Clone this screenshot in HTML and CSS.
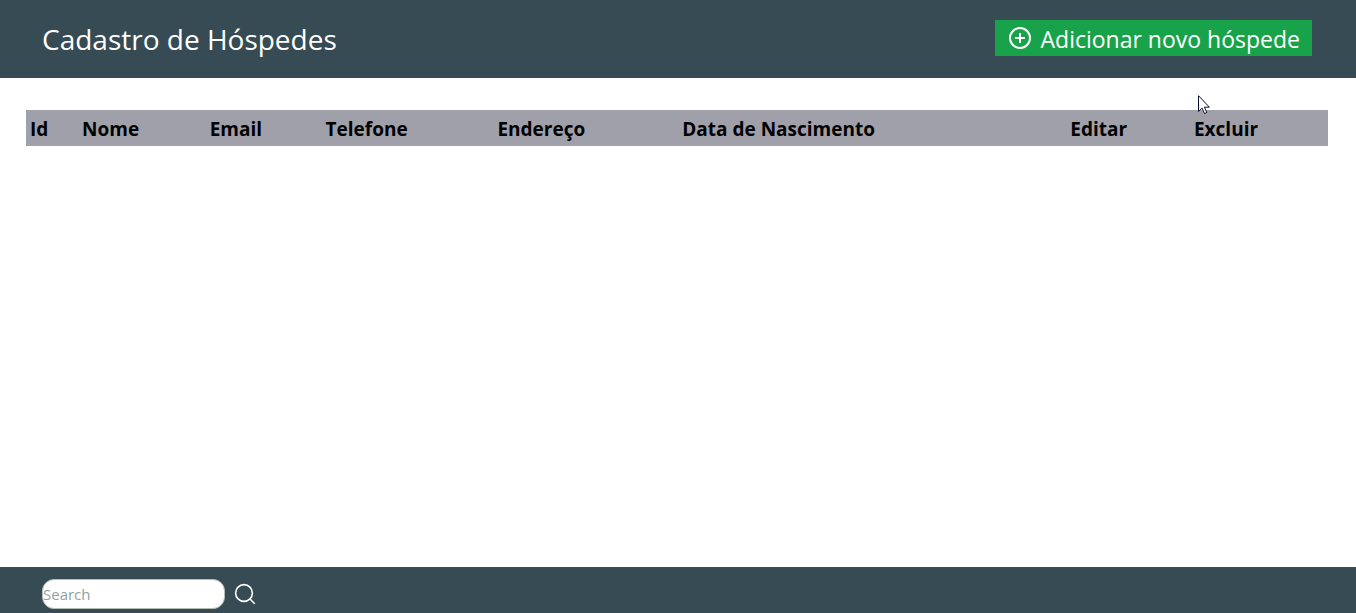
FILE: index.html
```html
<!DOCTYPE html>
<html lang="pt-BR">
<head>
  <meta charset="utf-8">
  <meta name="viewport" content="width=device-width, initial-scale=1">
  <title>Cadastro de Hóspedes</title>
  <link rel="stylesheet" href="styles.css">
</head>
<body class="page">
  <header class="topbar">
    <h1 class="topbar-title">Cadastro de Hóspedes</h1>
    <button class="add-button" type="button">
      <svg class="add-icon" viewBox="0 0 24 24" fill="none" stroke="currentColor" stroke-width="2" aria-hidden="true">
        <circle cx="12" cy="12" r="10"/>
        <path d="M12 7v10M7 12h10"/>
      </svg>
      <span>Adicionar novo hóspede</span>
    </button>
  </header>

  <main class="content">
    <table class="guests">
      <colgroup>
        <col class="col-id"><col class="col-name"><col class="col-email"><col class="col-phone">
        <col class="col-address"><col class="col-birth"><col class="col-edit"><col class="col-delete">
      </colgroup>
      <thead>
        <tr>
          <th scope="col">Id</th>
          <th scope="col">Nome</th>
          <th scope="col">Email</th>
          <th scope="col">Telefone</th>
          <th scope="col">Endereço</th>
          <th scope="col">Data de Nascimento</th>
          <th scope="col">Editar</th>
          <th scope="col">Excluir</th>
        </tr>
      </thead>
      <tbody></tbody>
    </table>
  </main>

  <footer class="footer">
    <form class="search">
      <input class="search-input" type="text" placeholder="Search" aria-label="Search">
      <button class="search-button" type="button" aria-label="Search">
        <svg class="search-icon" viewBox="0 0 22 22" fill="none" stroke="currentColor" stroke-width="1.6" aria-hidden="true">
          <circle cx="10" cy="10" r="8.4"/>
          <path d="M16 16l4.7 4.7"/>
        </svg>
      </button>
    </form>
  </footer>

  <svg class="pointer" viewBox="0 0 12 20" aria-hidden="true">
    <path d="M.5 .7v15.8l3.6-3.4 2.4 5.4 2.3-1-2.4-5.3h5z" fill="#fff" stroke="#0a1428"/>
  </svg>
</body>
</html>
```

FILE: styles.css
```css
* {
  box-sizing: border-box;
}

.page {
  display: flex;
  flex-direction: column;
  min-height: 100vh;
  margin: 0;
  background: #fff;
  color: #000;
  font-family: "Segoe UI", "Open Sans", "Noto Sans", sans-serif;
}

.topbar {
  display: flex;
  align-items: flex-start;
  justify-content: space-between;
  padding: 20px 44px 20px 42px;
  background: #364b53;
  color: #fff;
}

.topbar-title {
  margin: 0;
  font-size: 28px;
  font-weight: 400;
  line-height: 38px;
}

.add-button {
  display: flex;
  align-items: flex-start;
  gap: 9px;
  padding: 2px 12px 0 13px;
  border: 0;
  background: #18a34a;
  color: inherit;
  font: inherit;
  font-size: 23px;
  line-height: 34px;
}

.add-icon {
  width: 24px;
  height: 32px;
}

.content {
  flex: 1;
  padding: 32px 28px 32px 26px;
}

.guests {
  width: 100%;
  table-layout: fixed;
  border-collapse: collapse;
}

.guests th {
  padding: 5px 4px 3px;
  background: #a0a0aa;
  font-size: 19px;
  font-weight: 700;
  line-height: 28px;
  text-align: left;
  white-space: nowrap;
}

.col-id { width: 4%; }
.col-name { width: 9.8%; }
.col-email { width: 8.9%; }
.col-phone { width: 13.2%; }
.col-address { width: 14.2%; }
.col-birth { width: 29.8%; }
.col-edit { width: 9.5%; }
.col-delete { width: 10.6%; }

.footer {
  padding: 12px 42px 4px;
  background: #364b53;
}

.search {
  display: flex;
  align-items: center;
  gap: 9px;
}

.search-input {
  width: 183px;
  height: 30px;
  padding: 0;
  border: 1px solid #b4beb4;
  border-radius: 12px;
  background: #fff;
  font: inherit;
  font-size: 15px;
}

.search-input::placeholder {
  color: #8ea3a0;
  opacity: 1;
}

.search-button {
  display: flex;
  padding: 0;
  border: 0;
  background: none;
  color: #fff;
}

.search-icon {
  width: 22px;
  height: 22px;
}

.pointer {
  position: absolute;
  top: 95px;
  left: 1198px;
  width: 12px;
  height: 20px;
  pointer-events: none;
}
```
